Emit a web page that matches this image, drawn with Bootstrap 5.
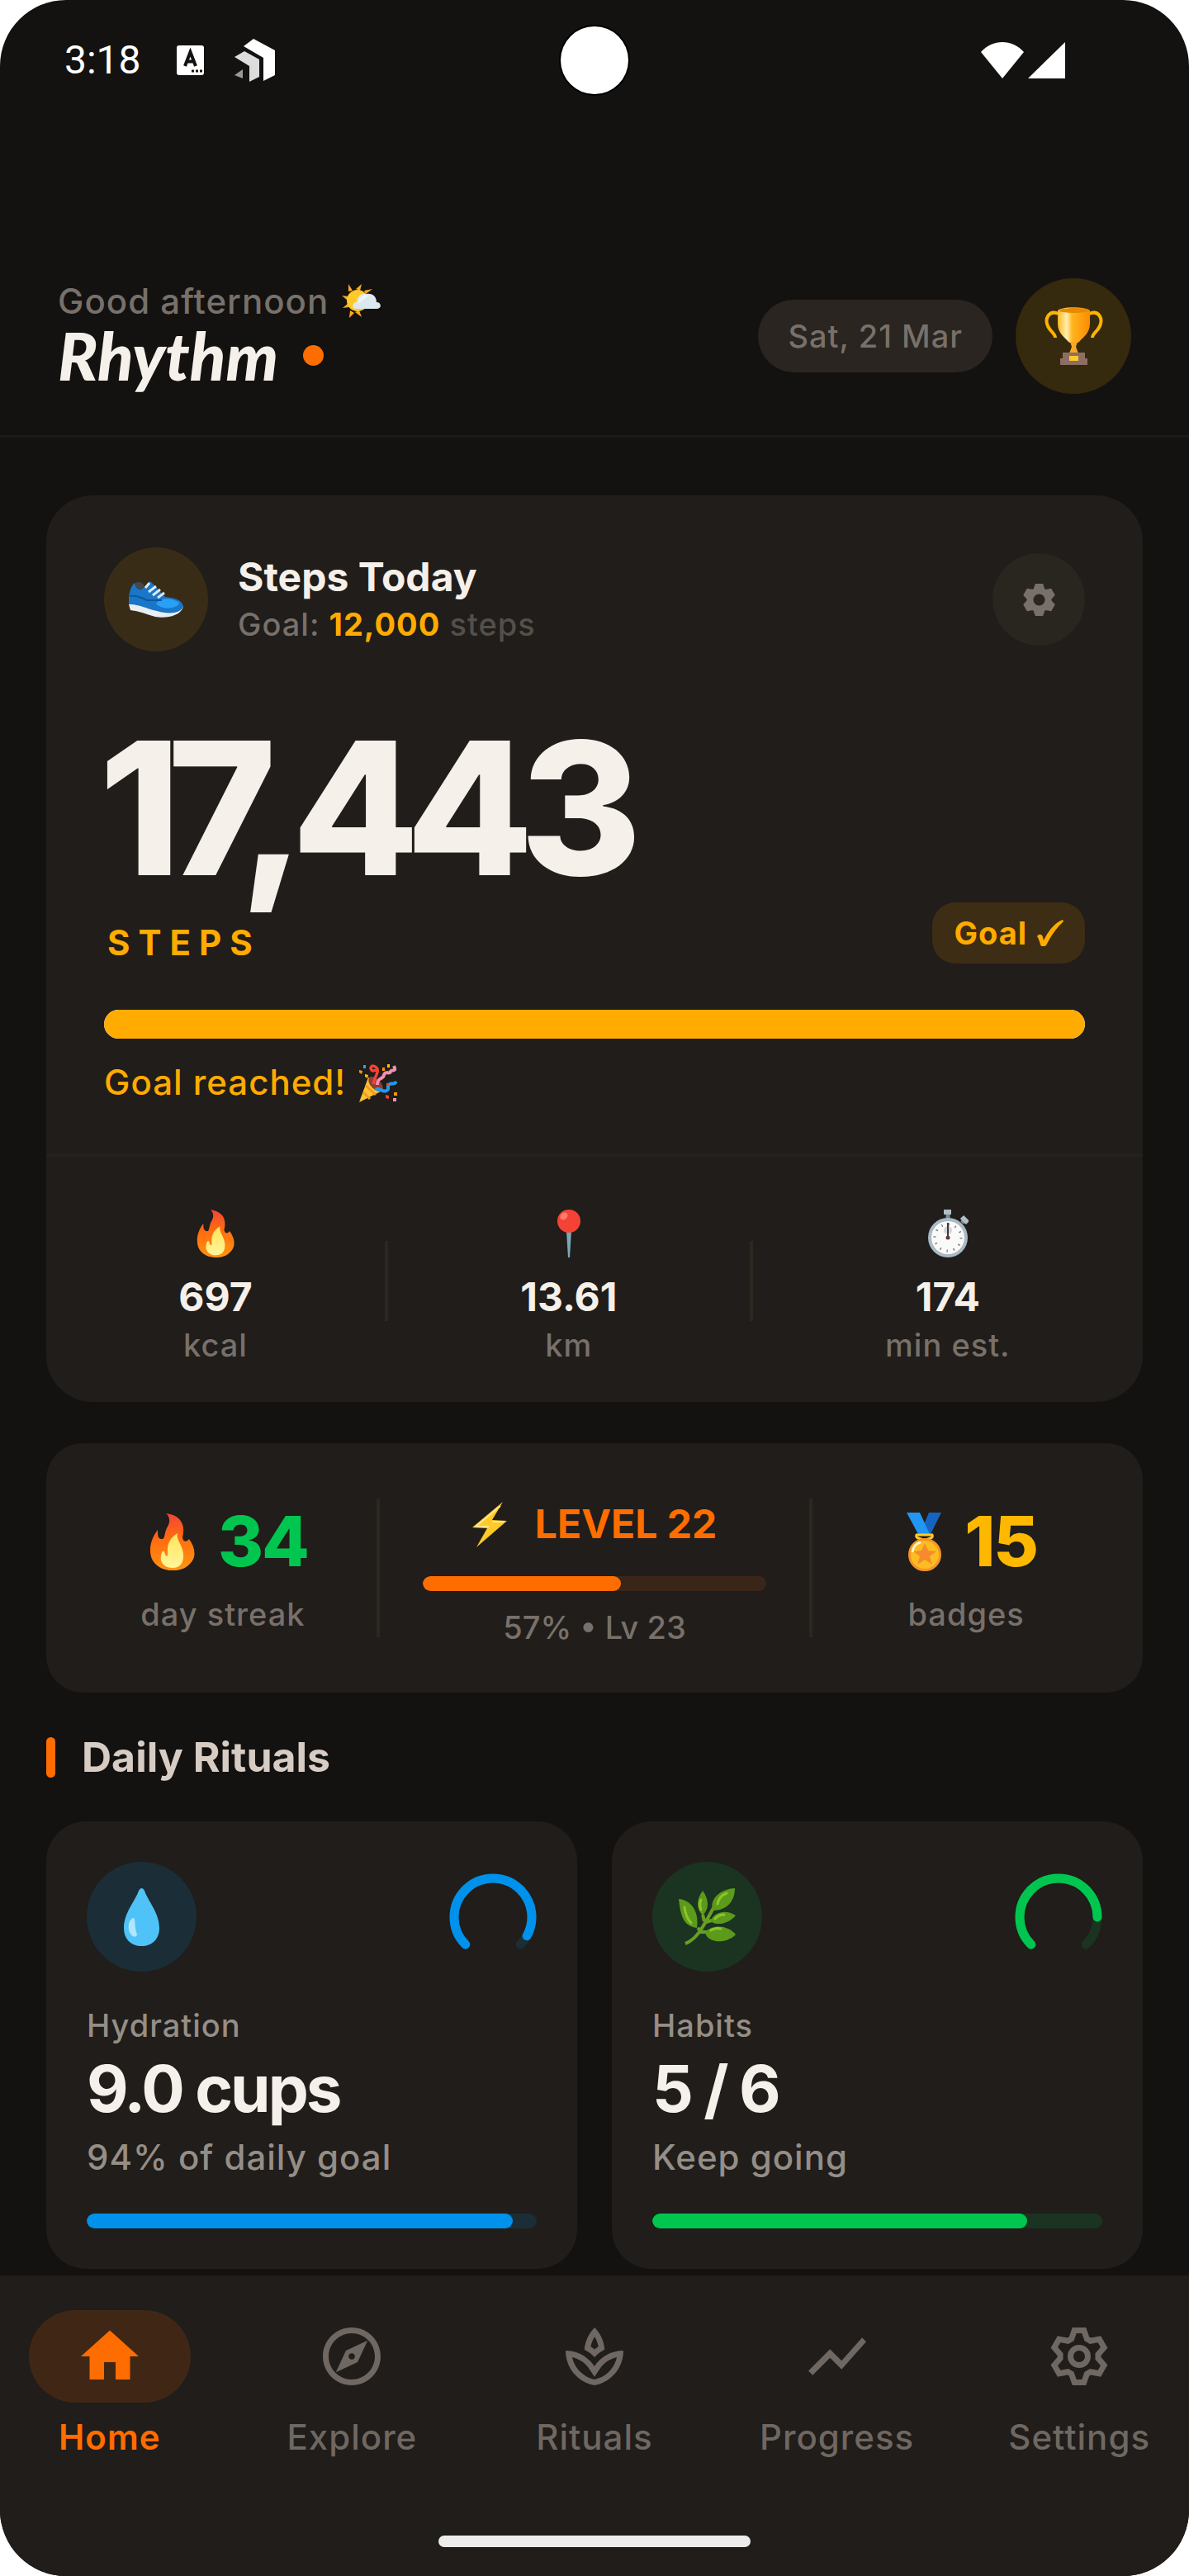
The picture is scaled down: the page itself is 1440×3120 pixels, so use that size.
<!DOCTYPE html>
<html lang="en">
<head>
<meta charset="utf-8">
<meta name="viewport" content="width=device-width, initial-scale=1">
<title>Rhythm</title>
<link rel="stylesheet" href="https://cdn.jsdelivr.net/npm/bootstrap@5.3.0/dist/css/bootstrap.min.css">
<style>
  :root {
    --ink: #f5f0ea; --muted: #78706a; --soft: #958e87; --dim: #554f4a;
    --page: #131210; --panel: #201d1a; --line: #2b2820;
    --amber: #ffab00; --orange: #ff6d00; --green: #00c64f; --blue: #0091ea;
  }
  body { background: #fff; font-family: Inter, "Open Sans", sans-serif; font-weight: 500; color: var(--ink); }
  svg { display: block; flex: none; }
  .app-shell { background: var(--page); border-radius: 80px; overflow: hidden; }
  .t-label { font-size: 38px; line-height: 48px; letter-spacing: 1px; }
  .t-text { font-size: 42px; line-height: 50px; letter-spacing: 1px; }
  .t-title { font-size: 48px; line-height: 60px; font-weight: 700; }
  .c-muted { color: var(--muted); } .c-soft { color: var(--soft); } .c-dim { color: var(--dim); }
  .c-amber { color: var(--amber); } .c-orange { color: var(--orange); } .c-green { color: var(--green); } .c-gold { color: #ffb800; }
  .disc { border: 0; border-radius: 50%; display: flex; align-items: center; justify-content: center; flex: none; padding: 0; }

  .status-bar { display: grid; grid-template-columns: 1fr auto 1fr; align-items: center; height: 146px; font: 400 48px/60px Roboto, sans-serif; color: #fff; }
  .status-left { padding-left: 78px; } .status-right { padding-right: 150px; }
  .status-note { margin: 0 37px 0 43px; }
  .camera { width: 82px; height: 82px; border-radius: 50%; background: #fff; box-shadow: 0 0 0 2px #000; }
  .app-header { padding: 191px 70px 50px; border-bottom: 3px solid #1b1a18; }
  .greeting { line-height: 46px; }
  .brand-row { gap: 30px; }
  .brand-name { font: italic 900 80px/84px Lato, sans-serif; }
  .brand-dot { width: 25px; height: 25px; border-radius: 50%; background: var(--orange); }
  .header-tools { gap: 28px; }
  .date-pill { height: 88px; padding: 0 36px; border-radius: 44px; background: #2a2520; }
  .trophy-btn { width: 140px; height: 140px; background: #35290e; }

  .app-main { padding: 70px 56px 8px; }
  .panel { background: var(--panel); border-radius: 56px; }
  .panel-body { padding: 63px 70px 61px; }
  .disc-shoe { width: 126px; height: 126px; background: #392c16; }
  .steps-heading { padding-left: 36px; }
  .goal-line { line-height: 54px; }
  .gear-btn { width: 112px; height: 112px; background: #29251f; color: var(--muted); }
  .step-total { font-size: 224px; line-height: 248px; font-weight: 800; letter-spacing: -16px; margin: 66px 0 14px -6px; }
  .step-unit { letter-spacing: 10px; font-weight: 700; }
  .goal-tag { height: 74px; padding: 0 26px; border-radius: 28px; background: #3d2d14; font-weight: 700; gap: 12px; }
  .progress { --bs-progress-height: 18px; --bs-progress-border-radius: 9px; }
  .progress-bar { border-radius: 9px; }
  .progress-goal { --bs-progress-height: 35px; --bs-progress-border-radius: 18px; margin-top: 56px; margin-bottom: 28px; }
  .progress-goal .progress-bar { border-radius: 18px; background: var(--amber); }
  .stat-row { border-top: 4px solid #24211e; padding: 48px 0 45px; }
  .stat-icon { height: 90px; display: flex; align-items: center; justify-content: center; margin-bottom: 2px; }
  .stat-name { margin-top: 4px; }
  .rule { width: 4px; background: var(--line); flex: none; }
  .rule-97 { height: 97px; } .rule-168 { height: 168px; }

  .summary { border-radius: 44px; margin-top: 50px; padding: 55px 28px; }
  .summary-side { flex: 1 1 0; }
  .summary-mid { flex: 1.4 1 0; }
  .summary-mid-body { padding: 0 52px; }
  .big-count { font-size: 84px; line-height: 96px; font-weight: 800; letter-spacing: -2px; gap: 28px; margin-bottom: 16px; }
  .big-count svg { margin-left: 14px; }
  .level-line { height: 86px; gap: 34px; }
  .track-orange { background: #3a2618; margin: 20px 0; }
  .track-orange .progress-bar { background: var(--orange); }
  .level-note { letter-spacing: 0; }

  .section-title { margin: 54px 0 53px; gap: 32px; font-size: 50px; line-height: 49px; color: #d7ccc4; }
  .section-mark { width: 11px; height: 49px; border-radius: 6px; background: var(--orange); }
  .ritual-grid { gap: 42px; }
  .ritual { flex: 1 1 0; border-radius: 48px; padding: 49px; }
  .ritual-disc { width: 133px; height: 133px; }
  .ritual-name { margin-top: 41px; }
  .ritual-value { font-size: 78px; line-height: 90px; font-weight: 700; letter-spacing: -3px; margin: 8px 0 13px; }
  .ritual .progress { margin-top: 43px; }
  .tint-blue { background: #1b2d37; } .tint-green { background: #1b3321; }
  .tint-blue .progress-bar { background: var(--blue); } .tint-green .progress-bar { background: var(--green); }

  .tab-bar { background: var(--panel); padding: 42px 0 35px; }
  .tab-list { gap: 28px; margin-bottom: 94px; }
  .tab-item { flex: 1 1 0; color: #6f6761; text-decoration: none; }
  .tab-pill { width: 196px; height: 112px; border-radius: 56px; margin-bottom: 17px; display: flex; align-items: center; justify-content: center; }
  .tab-item.active { color: var(--orange); font-weight: 600; }
  .tab-item.active .tab-pill { background: #402715; }
  .home-handle { width: 378px; height: 14px; border-radius: 7px; background: #ededed; }
</style>
</head>
<body>
<svg width="0" height="0" class="position-absolute" aria-hidden="true">
  <defs>
    <linearGradient id="flameOuter" x1="0.4" y1="0" x2="0.5" y2="1"><stop offset="0" stop-color="#f44336"/><stop offset=".45" stop-color="#ff6d10"/><stop offset="1" stop-color="#ff9412"/></linearGradient>
    <linearGradient id="flameInner" x1="0" y1="0" x2="0" y2="1"><stop offset="0" stop-color="#ffe45c"/><stop offset="1" stop-color="#fff59a"/></linearGradient>
    <linearGradient id="goldCup" x1="0" y1="0" x2="1" y2="0"><stop offset="0" stop-color="#ffb522"/><stop offset=".28" stop-color="#fff0b0"/><stop offset=".45" stop-color="#ffb41f"/><stop offset="1" stop-color="#fb8c00"/></linearGradient>
    <symbol id="flame" viewBox="0 0 55 69">
      <path fill="url(#flameOuter)" d="M20 0C38 2 44 14 40 29C41 35 45 35 48 31C56 42 57 54 49 61C40 72 17 72 7 61C-2 52-1 34 10 20C10 26 10 30 14 31C20 32 17 24 22 16C26 9 24 3 20 0Z"/>
      <path fill="url(#flameInner)" d="M34 24C32 32 40 38 41 49C42 60 37 66 28 66C19 66 12 60 14 51C15 46 16 45 18 46C19 50 20 53 22 51C23 47 18 34 34 24Z"/>
    </symbol>
  </defs>
</svg>

<div class="app-shell min-vh-100 d-flex flex-column">
  <div class="status-bar">
    <div class="status-left d-flex align-items-center">
      <span>3:18</span>
      <svg class="status-note" width="33" height="36" viewBox="0 0 33 36"><rect width="33" height="36" rx="3" fill="#fff"/><path d="M10 25L16.500 8L23 25M12.500 19.500H20.500" fill="none" stroke="#131210" stroke-width="4"/><path d="M18 31h3M23 31h3M28 31h3" stroke="#131210" stroke-width="3"/></svg>
      <svg width="49" height="52" viewBox="0 0 49 52"><path fill="#fff" d="M23 0L49 14V44L35 51V23L11 9Z"/><path fill="#ddd" d="M12 15L30 25V46L18 52V33L0 22Z"/><path fill="#999" d="M0 44L10 37V48Z"/></svg>
    </div>
    <div class="camera"></div>
    <div class="status-right d-flex justify-content-end">
      <svg width="102" height="44" viewBox="0 0 102 44"><path fill="#fff" d="M26 44L0 12C14-4 38-4 52 12ZM102 0V44H57Z"/></svg>
    </div>
  </div>

  <header class="app-header d-flex align-items-center justify-content-between">
    <div>
      <div class="greeting t-text c-muted d-flex align-items-center gap-3">Good afternoon
        <svg width="47" height="42" viewBox="0 0 47 42" role="img" aria-label="Sun behind cloud"><path fill="#ffa726" d="M8 0L13 8L8 9ZM24 0L22 8L17 6ZM37 6L29 12L27 8ZM0 14L8 15L7 20ZM1 29L8 23L9 28ZM9 41L10 32L15 35ZM24 40L16 34L21 32Z"/><circle cx="19" cy="20" r="13" fill="#ffca28"/><path fill="#dce8ef" d="M16 30C12 30 12 22 18 22C19 14 24 11 30 12C37 11 42 15 42 22C48 22 49 30 42 30Z"/><path fill="#eef5f8" d="M19 24C22 14 27 12 33 14C29 16 24 22 19 24Z"/></svg>
      </div>
      <div class="brand-row d-flex align-items-center"><h1 class="brand-name m-0">Rhythm</h1><span class="brand-dot"></span></div>
    </div>
    <div class="header-tools d-flex align-items-center">
      <div class="date-pill t-label c-muted d-flex align-items-center">Sat, 21 Mar</div>
      <button class="disc trophy-btn" type="button" aria-label="Achievements">
        <svg width="71" height="70" viewBox="0 0 71 70"><path d="M17 8C5 3 0 14 4 23C8 31 13 32 13 37M54 8C66 3 71 14 67 23C63 31 58 32 58 37" fill="none" stroke="#ffb300" stroke-width="4"/><path fill="url(#goldCup)" d="M16 4C22-1 49-1 55 4V20C55 32 46 37 41 43H30C25 37 16 32 16 20Z"/><ellipse cx="35.500" cy="4" rx="18" ry="3" fill="#e68a00"/><path fill="#f9a825" d="M31 42H40L38 48L41 56H30L33 48Z"/><path fill="#8d6e63" d="M22 55H49V62H52V70H19V62H22Z"/><rect x="30" y="59" width="11" height="6" fill="#ffca28"/></svg>
      </button>
    </div>
  </header>

  <main class="app-main">
    <section class="panel">
      <div class="panel-body">
        <div class="d-flex align-items-center">
          <div class="disc disc-shoe">
            <svg width="66" height="44" viewBox="0 0 66 44" role="img" aria-label="Running shoe"><path fill="#e9eef2" d="M0 28L2 35C12 36 22 40 32 43C44 45 62 43 66 31L62 26Z"/><path fill="#1976c8" d="M0 28C-1 18 2 6 7 2C11 10 15 11 20 6L26 0L31 5L44 19C54 20 65 22 66 31C61 41 44 39 34 36C21 33 10 27 0 28Z"/><path fill="#29a0f5" d="M33 27C38 19 53 20 61 26C60 33 40 36 33 27Z"/><path fill="#43474f" d="M7 3C11 0 16 0 19 6L16 10C10 11 8 7 7 3Z"/><path d="M1 18C10 17 16 20 22 23L40 23" fill="none" stroke="#0d57a0" stroke-width="2"/><path d="M24 13L33 6M29 17L38 10M35 20L43 14M20 8L25 2" stroke="#dfe7ee" stroke-width="3"/></svg>
          </div>
          <div class="steps-heading flex-grow-1">
            <h2 class="t-title m-0">Steps Today</h2>
            <div class="goal-line t-label c-muted">Goal: <strong class="c-amber">12,000</strong> <span class="c-dim">steps</span></div>
          </div>
          <button class="disc gear-btn" type="button" aria-label="Step settings">
            <svg width="47" height="47" viewBox="0 0 24 24" fill="currentColor" stroke="currentColor" stroke-width="2"><path fill-rule="evenodd" d="M10.350 3H13.650L14.680 5.970L15.880 6.660L18.970 6.070L20.620 8.930L18.560 11.310V12.690L20.620 15.070L18.970 17.930L15.880 17.340L14.680 18.030L13.650 21H10.350L9.320 18.030L8.120 17.340L5.030 17.930L3.380 15.070L5.440 12.690V11.310L3.380 8.930L5.030 6.070L8.120 6.660L9.320 5.970ZM12 7.400A4.600 4.600 0 1 0 12 16.600A4.600 4.600 0 1 0 12 7.400Z"/></svg>
          </button>
        </div>
        <div class="d-flex align-items-end justify-content-between">
          <div>
            <div class="step-total">17,443</div>
            <div class="step-unit t-text c-amber ps-1">STEPS</div>
          </div>
          <div class="goal-tag t-label c-amber d-flex align-items-center">Goal
            <svg width="32" height="32" viewBox="0 0 32 32" role="img" aria-label="reached"><path fill="currentColor" d="M0 20C2 17 6 17 7 21L8 25C13 14 22 3 31 0L32 2C23 10 16 21 11 31C8 33 5 33 4 30C3 26 2 23 0 20Z"/></svg>
          </div>
        </div>
        <div class="progress progress-goal" role="progressbar" aria-label="Step goal" aria-valuenow="100" aria-valuemin="0" aria-valuemax="100"><div class="progress-bar" style="width:100%"></div></div>
        <div class="t-text c-amber d-flex align-items-center gap-3">Goal reached!
          <svg width="46" height="47" viewBox="0 0 46 47" role="img" aria-label="Party popper"><path fill="#ffc233" d="M0 47L11 17C17 18 27 26 28 33Z"/><path d="M5 35L13 43M8 27L20 38" stroke="#f29b1d" stroke-width="3"/><ellipse cx="20" cy="25" rx="6" ry="11" transform="rotate(-45 20 25)" fill="#8d3f32"/><path d="M17 25C19 14 24 12 22 7C20 2 14 2 14 6C15 10 21 10 22 5" fill="none" stroke="#f44336" stroke-width="3.500"/><path d="M22 26C22 16 29 20 30 14C32 8 36 14 38 10C39 6 46 12 42 3" fill="none" stroke="#f48fb1" stroke-width="4"/><path d="M20 32C25 28 28 36 33 33C38 31 32 28 37 25C40 23 42 27 45 22" fill="none" stroke="#1e9bf0" stroke-width="4"/><path fill="#29a8f5" d="M5 2h3v4H5z"/><path fill="#ff9800" d="M0 8l4 1-1 4-3-2zM28 5h3v4h-3zM42 35h4v4h-4z"/><path fill="#ffc400" d="M7 13l4 1-1 4-3-2zM34 1h3v4h-3z"/><path fill="#f44336" d="M32 38l4 1v4l-4-1zM33 24h3v3h-3z"/><path fill="#f48fb1" d="M41 42h4v4h-4z"/></svg>
        </div>
      </div>
      <div class="stat-row d-flex align-items-center justify-content-evenly text-center">
        <div><div class="stat-icon"><svg width="46" height="58" aria-hidden="true"><use href="#flame"/></svg></div><div class="t-title">697</div><div class="stat-name t-label c-muted">kcal</div></div>
        <div class="rule rule-97"></div>
        <div><div class="stat-icon"><svg width="28" height="58" viewBox="0 0 28 58" aria-hidden="true"><path fill="#78a9ba" d="M11 26H17L15 58H13Z"/><circle cx="14" cy="14" r="14" fill="#f44336"/><ellipse cx="8" cy="8" rx="5" ry="4" transform="rotate(-45 8 8)" fill="#ff7b6b"/></svg></div><div class="t-title">13.61</div><div class="stat-name t-label c-muted">km</div></div>
        <div class="rule rule-97"></div>
        <div><div class="stat-icon"><svg width="50" height="58" viewBox="0 0 50 58" aria-hidden="true"><path d="M25 4V12M42 16L47 11" stroke="#78909c" stroke-width="5"/><path d="M20 3H29M42 9L49 16" stroke="#b0bec5" stroke-width="6"/><circle cx="25" cy="34" r="24" fill="#a9bac4"/><circle cx="25" cy="34" r="20" fill="#fafafa"/><circle cx="25" cy="25" r="5" fill="#cfd8dc"/><circle cx="25" cy="34" r="16" fill="none" stroke="#8c8278" stroke-width="3" stroke-dasharray="1.500 6.878"/><path d="M25 16V34" stroke="#4e342e" stroke-width="2"/><circle cx="25" cy="34" r="2.500" fill="#5d4037"/></svg></div><div class="t-title">174</div><div class="stat-name t-label c-muted">min est.</div></div>
      </div>
    </section>

    <section class="panel summary d-flex align-items-center text-center">
      <div class="summary-side">
        <div class="big-count c-green d-flex align-items-center justify-content-center"><svg width="55" height="69" aria-hidden="true"><use href="#flame"/></svg>34</div>
        <div class="t-label c-muted">day streak</div>
      </div>
      <div class="rule rule-168"></div>
      <div class="summary-mid">
        <div class="summary-mid-body">
          <div class="level-line t-title c-orange d-flex align-items-center justify-content-center"><svg width="42" height="55" viewBox="0 0 42 55" aria-hidden="true"><path fill="#ffc928" d="M37 0L0 31L18 32L5 55L42 23L24 22Z"/><path d="M34 5L4 30L20 30M24 24L39 24" fill="none" stroke="#ffe68a" stroke-width="2"/></svg>LEVEL 22</div>
          <div class="progress track-orange" role="progressbar" aria-label="Level progress" aria-valuenow="57" aria-valuemin="0" aria-valuemax="100"><div class="progress-bar" style="width:57.700%"></div></div>
          <div class="level-note t-label c-muted">57% • Lv 23</div>
        </div>
      </div>
      <div class="rule rule-168"></div>
      <div class="summary-side">
        <div class="big-count c-gold d-flex align-items-center justify-content-center"><svg width="42" height="71" viewBox="0 0 42 71" aria-hidden="true"><path fill="#1565c0" d="M27 0H42L29 26H16Z"/><path fill="#2196f3" d="M0 0H16L28 26H14Z"/><path d="M12 27H31C33 32 25 31 22 34C18 31 10 32 12 27Z" fill="none" stroke="#ffca28" stroke-width="3"/><circle cx="22" cy="51" r="18.500" fill="#fcbd22" stroke="#f79329" stroke-width="3"/><path fill="#f58b2d" d="M22 37L26 46L36 47L28 53L31 63L22 57L13 63L16 53L8 47L18 46Z"/><path d="M7 48C8 41 12 37 17 36" fill="none" stroke="#fff3c0" stroke-width="3"/></svg>15</div>
        <div class="t-label c-muted">badges</div>
      </div>
    </section>

    <h2 class="section-title fw-bold d-flex align-items-center"><span class="section-mark"></span>Daily Rituals</h2>

    <div class="ritual-grid d-flex">
      <article class="panel ritual">
        <div class="d-flex align-items-center justify-content-between">
          <div class="disc ritual-disc tint-blue"><svg width="43" height="70" viewBox="0 0 43 70" aria-hidden="true"><path fill="#4fc3f7" d="M18 3C20-1 23-1 25 3C29 15 43 30 43 48C43 62 34 70 21.500 70C9 70 0 62 0 48C0 30 14 15 18 3Z"/><path fill="#b3e5fc" d="M11 36C15 35 12 46 16 56C15 61 8 59 6 50C5 43 7 38 11 36Z"/></svg></div>
          <svg width="106" height="106" viewBox="0 0 106 106" fill="none" stroke-width="11" stroke-linecap="round" role="img" aria-label="94 percent"><path stroke="#1b2d37" d="M19.770 86.230A47 47 0 1 1 86.230 86.230"/><path stroke="#0091ea" d="M19.770 86.230A47 47 0 1 1 86.230 86.230" pathLength="100" stroke-dasharray="94 200"/></svg>
        </div>
        <h3 class="ritual-name t-label c-soft mb-0">Hydration</h3>
        <div class="ritual-value">9.0 cups</div>
        <div class="t-text c-soft">94% of daily goal</div>
        <div class="progress tint-blue" role="progressbar" aria-label="Hydration" aria-valuenow="94" aria-valuemin="0" aria-valuemax="100"><div class="progress-bar" style="width:94.700%"></div></div>
      </article>
      <article class="panel ritual">
        <div class="d-flex align-items-center justify-content-between">
          <div class="disc ritual-disc tint-green"><svg width="69" height="70" viewBox="0 0 69 70" aria-hidden="true"><path d="M8 67C22 62 30 46 42 24M26 53L34 53M33 41L40 39M23 48L27 52M29 32L31 40" fill="none" stroke="#689f24" stroke-width="4"/><g fill="#5c9a1b"><path d="M0 13C14 14 25 27 22 48C4 46 2 30 0 13Z"/><path d="M29 3C37 14 37 25 29 33C21 25 21 14 29 3Z"/><path d="M68 0C68 16 58 27 41 27C37 13 50 1 68 0Z"/><path d="M69 33C61 43 46 46 38 40C44 27 59 26 69 33Z"/><path d="M69 56C58 68 34 67 32 53C42 43 60 45 69 56Z"/></g><path d="M7 23C8 32 11 38 15 42M27 14C25 18 26 23 27 26M47 19C48 12 53 8 58 6M44 37C47 33 51 32 55 32M39 51C43 48 47 48 51 49" fill="none" stroke="#8cc52b" stroke-width="3" stroke-linecap="round"/></svg></div>
          <svg width="106" height="106" viewBox="0 0 106 106" fill="none" stroke-width="11" stroke-linecap="round" role="img" aria-label="5 of 6"><path stroke="#1b3321" d="M19.770 86.230A47 47 0 1 1 86.230 86.230"/><path stroke="#00c64f" d="M19.770 86.230A47 47 0 1 1 86.230 86.230" pathLength="100" stroke-dasharray="83.300 200"/></svg>
        </div>
        <h3 class="ritual-name t-label c-soft mb-0">Habits</h3>
        <div class="ritual-value">5 / 6</div>
        <div class="t-text c-soft">Keep going</div>
        <div class="progress tint-green" role="progressbar" aria-label="Habits" aria-valuenow="83" aria-valuemin="0" aria-valuemax="100"><div class="progress-bar" style="width:83.300%"></div></div>
      </article>
    </div>
  </main>

  <nav class="tab-bar mt-auto" aria-label="Main">
    <div class="tab-list t-text d-flex">
      <a class="tab-item active d-flex flex-column align-items-center" href="#home" aria-current="page"><span class="tab-pill"><svg width="84" height="84" viewBox="0 0 24 24" fill="currentColor"><path d="M10 20v-6h4v6h5v-8h3L12 3 2 12h3v8z"/></svg></span>Home</a>
      <a class="tab-item d-flex flex-column align-items-center" href="#explore"><span class="tab-pill"><svg width="84" height="84" viewBox="0 0 24 24" fill="currentColor"><path d="M12 2C6.480 2 2 6.480 2 12s4.480 10 10 10 10-4.480 10-10S17.520 2 12 2zm0 18c-4.410 0-8-3.590-8-8s3.590-8 8-8 8 3.590 8 8-3.590 8-8 8zm-5.500-2.500l7.510-3.490L17.500 6.500 9.990 9.990 6.500 17.500zm5.500-6.600c.61 0 1.100.49 1.100 1.100s-.49 1.100-1.100 1.100-1.100-.49-1.100-1.100.49-1.100 1.100-1.100z"/></svg></span>Explore</a>
      <a class="tab-item d-flex flex-column align-items-center" href="#rituals"><span class="tab-pill"><svg width="84" height="84" viewBox="0 0 24 24" fill="currentColor"><path d="M15.490 9.630c-.18-2.790-1.310-5.510-3.430-7.630-2.140 2.140-3.320 4.860-3.550 7.630 1.280.68 2.460 1.560 3.490 2.630 1.030-1.060 2.210-1.940 3.490-2.630zm-3.440-4.440c.63 1.030 1.070 2.180 1.300 3.380-.47.3-.91.63-1.340.98-.42-.34-.87-.67-1.330-.97.25-1.200.71-2.350 1.370-3.390zM12 15.450c-.82-1.250-1.860-2.340-3.060-3.200-.13-.09-.27-.16-.4-.26.13.09.27.17.39.25C6.980 10.830 4.590 10 2 10c0 5.320 3.360 9.820 8.030 11.490.63.23 1.290.4 1.970.51.68-.12 1.330-.29 1.970-.51C18.640 19.820 22 15.320 22 10c-4.330 0-8.110 2.290-10 5.450zm1.320 4.150c-.44.15-.88.27-1.330.37-.44-.09-.87-.21-1.280-.36-3.290-1.180-5.700-3.990-6.450-7.350 1.100.26 2.150.71 3.120 1.330l-.02.01c.13.09.26.18.39.25l.07.04c.99.72 1.840 1.610 2.510 2.650L12 19.100l1.670-2.550c.69-1.050 1.550-1.950 2.530-2.660l.07-.05c.09-.05.18-.11.27-.17l-.01-.02c.98-.65 2.070-1.130 3.210-1.400-.75 3.370-3.150 6.180-6.420 7.350z"/></svg></span>Rituals</a>
      <a class="tab-item d-flex flex-column align-items-center" href="#progress"><span class="tab-pill"><svg width="84" height="84" viewBox="0 0 24 24" fill="currentColor"><path d="M3.500 18.490l6-6.010 4 4L22 6.920l-1.410-1.410-7.090 7.970-4-4L2 16.990z"/></svg></span>Progress</a>
      <a class="tab-item d-flex flex-column align-items-center" href="#settings"><span class="tab-pill"><svg width="84" height="84" viewBox="0 0 24 24" fill="none" stroke="currentColor" stroke-width="2"><path d="M10.350 3H13.650L14.680 5.970L15.880 6.660L18.970 6.070L20.620 8.930L18.560 11.310V12.690L20.620 15.070L18.970 17.930L15.880 17.340L14.680 18.030L13.650 21H10.350L9.320 18.030L8.120 17.340L5.030 17.930L3.380 15.070L5.440 12.690V11.310L3.380 8.930L5.030 6.070L8.120 6.660L9.320 5.970Z"/><circle cx="12" cy="12" r="3"/></svg></span>Settings</a>
    </div>
    <div class="home-handle mx-auto"></div>
  </nav>
</div>
<script src="https://cdn.jsdelivr.net/npm/bootstrap@5.3.0/dist/js/bootstrap.bundle.min.js"></script>
</body>
</html>
